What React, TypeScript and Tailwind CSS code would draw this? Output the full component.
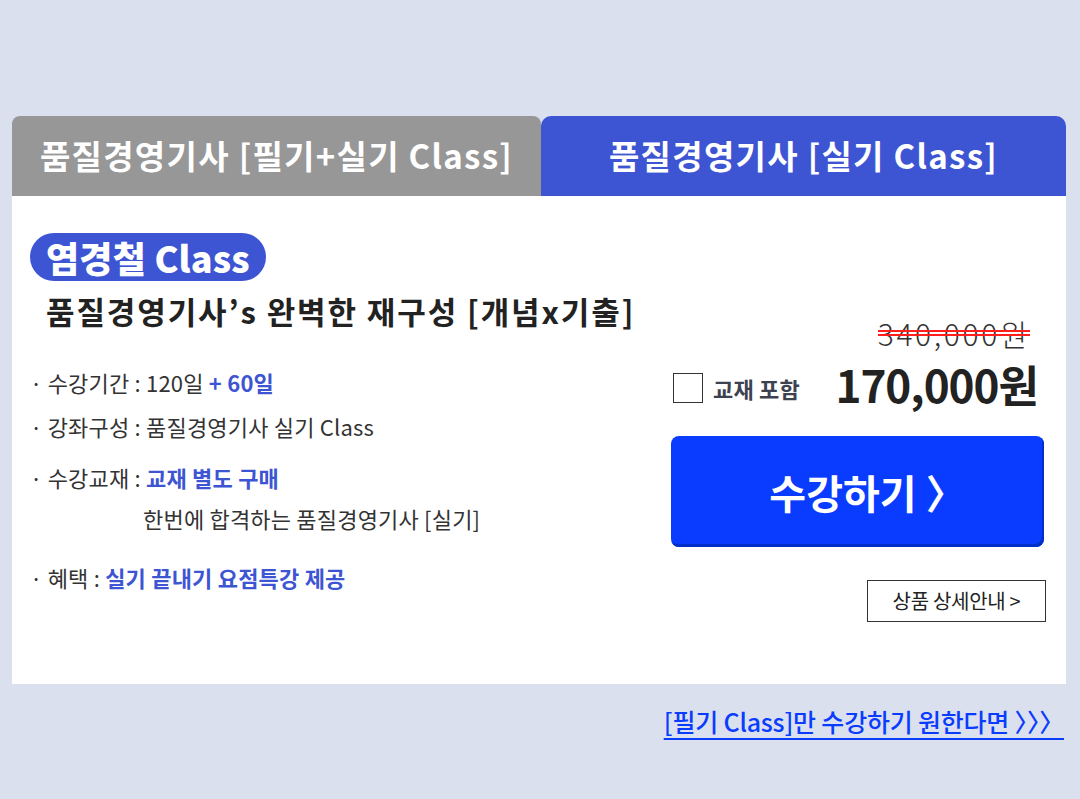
import React, { useState } from "react";

const font = { fontFamily: '"Noto Sans CJK KR", "Noto Sans", sans-serif' };

export default function App() {
    const [withBook, setWithBook] = useState(false);

    return (
        <main className="min-h-[799px] w-full bg-[#dae0ee] pt-[116px] px-3" style={font}>
            <div className="w-[1054px]">
                {/* Tabs */}
                <div className="flex h-20">
                    <button className="w-[529px] rounded-t-[8px] bg-[#979797] text-[33px] font-bold text-white tracking-[1.3px]">
                        품질경영기사 [필기+실기 Class]
                    </button>
                    <button className="flex-1 rounded-t-[10px] bg-[#3d55d3] text-[33px] font-bold text-white tracking-[1.3px]">
                        품질경영기사 [실기 Class]
                    </button>
                </div>

                {/* Content */}
                <section className="flex h-[488px] bg-white pl-[18px] pr-5 pt-[37px]">
                    {/* LEFT */}
                    <div className="flex-1">
                        <span className="inline-flex h-12 items-center rounded-full bg-[#3d55d3] px-[16px] text-[36px] font-black text-white tracking-[0.2px]">
                            염경철 Class
                        </span>
                        <h2 className="ml-4 mt-[10px] text-[31px] font-bold leading-[40px] text-[#222] tracking-[1.9px]">
                            품질경영기사’s 완벽한 재구성 [개념x기출]
                        </h2>

                        <ul className="mt-[37px] flex flex-col text-[22px] leading-[28px] text-[#333] tracking-[0.2px]">
                            <li>
                                · 수강기간 : 120일{" "}
                                <span className="font-bold text-[#3d55d3]">+ 60일</span>
                            </li>
                            <li className="mt-4">· 강좌구성 : 품질경영기사 실기 Class</li>
                            <li className="mt-[23px]">
                                · 수강교재 :{" "}
                                <span className="font-bold text-[#3d55d3]">교재 별도 구매</span>
                            </li>
                            <li className="mt-[13px] pl-[113px]">한번에 합격하는 품질경영기사 [실기]</li>
                            <li className="mt-[31px]">
                                · 혜택 :{" "}
                                <span className="font-bold text-[#3d55d3]">실기 끝내기 요점특강 제공</span>
                            </li>
                        </ul>
                    </div>

                    {/* RIGHT */}
                    <aside className="flex w-[375px] flex-col pt-[82px]">
                        <p className="relative mr-4 self-end text-[30px] font-light leading-[36px] text-[#333] tracking-[2.6px]">
                            340,000원
                            <span className="absolute left-0 right-0 top-[15px] h-[2px] bg-[#ff1e1e]" />
                            <span className="absolute left-0 right-0 top-[19px] h-[2px] bg-[#ff1e1e]" />
                        </p>

                        <div className="mt-[7px] flex items-center pl-[2px]">
                            <label className="flex cursor-pointer items-center">
                                <input
                                    type="checkbox"
                                    checked={withBook}
                                    onChange={(e) => setWithBook(e.target.checked)}
                                    className="sr-only"
                                />
                                <span className="h-[30px] w-[30px] border-[1.5px] border-[#333] bg-white" />
                                <span className="ml-[10px] text-[22px] font-bold text-[#3d4250] tracking-[0.2px]">
                                    교재 포함
                                </span>
                            </label>
                            <span className="ml-auto mb-[8px] mr-2 text-[44px] font-bold leading-[52px] text-[#222] tracking-[-1px]">
                                170,000원
                            </span>
                        </div>

                        <button className="mt-[18px] flex h-[111px] w-[373px] items-center justify-center rounded-[8px] bg-[#0a3cff] pl-5 text-[40px] font-bold text-white shadow-[inset_-2px_-3px_0_#0030c8] tracking-[0px]">
                            수강하기 〉
                        </button>

                        <button className="mt-[33px] h-[42px] w-[179px] self-end border border-[#333] text-[20px] text-[#222] tracking-[-0.3px]">
                            상품 상세안내 &gt;
                        </button>
                    </aside>
                </section>

                {/* Bottom link */}
                <div className="flex justify-end pt-[19px] pr-[2px]">
                    <a
                        href="#"
                        className="text-[25px] font-medium text-[#0a3cff] underline decoration-2 underline-offset-[6px] tracking-[-0.2px]"
                    >
                        [필기 Class]만 수강하기 원한다면 〉〉〉
                    </a>
                </div>
            </div>
        </main>
    );
}
